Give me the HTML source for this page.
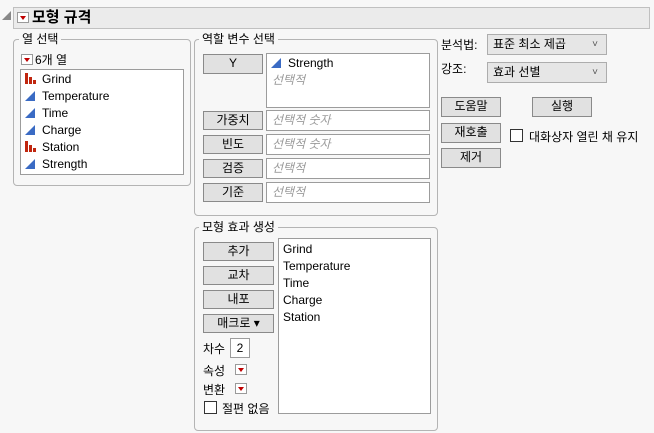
<!DOCTYPE html>
<html><head><meta charset="utf-8"><style>
*{margin:0;padding:0;box-sizing:border-box}
body{width:654px;height:433px;background:#f7f7f7;font-family:"Liberation Sans","Noto Sans CJK KR",sans-serif;font-size:12px;color:#000;position:relative;overflow:hidden}
.a{position:absolute;white-space:nowrap}
.grp{position:absolute;border:1px solid #b4b4b4;border-radius:4px}
.lg{position:absolute;background:#f7f7f7;padding:0 3px;font-size:12px;line-height:14px}
.btn{position:absolute;background:#e1e1e1;border:1px solid #8a8a8a;text-align:center;font-size:12px;line-height:17px}
.box{position:absolute;background:#fff;border:1px solid #9c9c9c}
.ph{color:#9a9a9a;font-style:italic}
.rd{position:absolute;width:12px;height:11px;border:1px solid #9a9a9a;background:#fff}
.rd:after{content:"";position:absolute;left:2px;top:3px;border-left:3px solid transparent;border-right:3px solid transparent;border-top:4px solid #c00000}
.tri{display:inline-block;width:0;height:0;border-left:10px solid transparent;border-bottom:10px solid #3a6bc4;vertical-align:-1px;margin-right:7px}
.bar{display:inline-block;width:10px;height:11px;position:relative;margin-right:7px;vertical-align:-1px}
.bar i{position:absolute;bottom:0;width:3px;background:#c0260f}
.dd{position:absolute;background:#e6e6e6;border:1px solid #adadad;font-size:12px;line-height:19px;padding-left:5px}
.dd:after{content:"˅";position:absolute;right:8px;top:0;font-size:10px;color:#555}
.cb{position:absolute;width:13px;height:13px;border:1px solid #333;background:#fff}
.li{position:absolute;left:0;line-height:17px}
</style></head><body>
<div class="a" style="left:2px;top:11px;width:0;height:0;border-left:9px solid transparent;border-bottom:9px solid #888"></div>
<div class="a" style="left:13px;top:7px;width:637px;height:22px;background:#ebebeb;border:1px solid #c0c0c0"></div>
<div class="rd" style="left:17px;top:12px"></div>
<div class="a" style="left:32px;top:7px;font-size:15px;font-weight:bold;line-height:21px">모형 규격</div>

<div class="grp" style="left:13px;top:39px;width:178px;height:147px"></div>
<div class="lg" style="left:19px;top:32px">열 선택</div>
<div class="rd" style="left:21px;top:54px"></div>
<div class="a" style="left:35px;top:53px;line-height:14px">6개 열</div>
<div class="box" style="left:20px;top:69px;width:164px;height:106px">
<div class="li" style="left:4px;top:1px"><span class="bar"><i style="left:0;height:11px"></i><i style="left:4px;height:7px"></i><i style="left:8px;height:4px"></i></span>Grind</div>
<div class="li" style="left:4px;top:18px"><span class="tri"></span>Temperature</div>
<div class="li" style="left:4px;top:35px"><span class="tri"></span>Time</div>
<div class="li" style="left:4px;top:52px"><span class="tri"></span>Charge</div>
<div class="li" style="left:4px;top:69px"><span class="bar"><i style="left:0;height:11px"></i><i style="left:4px;height:7px"></i><i style="left:8px;height:4px"></i></span>Station</div>
<div class="li" style="left:4px;top:86px"><span class="tri"></span>Strength</div>
</div>

<div class="grp" style="left:194px;top:39px;width:244px;height:177px"></div>
<div class="lg" style="left:199px;top:32px">역할 변수 선택</div>
<div class="btn" style="left:203px;top:54px;width:60px;height:20px">Y</div>
<div class="box" style="left:266px;top:53px;width:164px;height:55px">
<div class="li" style="left:4px;top:1px"><span class="tri"></span>Strength</div>
<div class="li ph" style="left:5px;top:18px">선택적</div></div>
<div class="btn" style="left:203px;top:111px;width:60px;height:19px">가중치</div>
<div class="box ph" style="left:266px;top:110px;width:164px;height:21px;padding-left:5px;line-height:19px">선택적 숫자</div>
<div class="btn" style="left:203px;top:135px;width:60px;height:19px">빈도</div>
<div class="box ph" style="left:266px;top:134px;width:164px;height:21px;padding-left:5px;line-height:19px">선택적 숫자</div>
<div class="btn" style="left:203px;top:159px;width:60px;height:19px">검증</div>
<div class="box ph" style="left:266px;top:158px;width:164px;height:21px;padding-left:5px;line-height:19px">선택적</div>
<div class="btn" style="left:203px;top:183px;width:60px;height:19px">기준</div>
<div class="box ph" style="left:266px;top:182px;width:164px;height:21px;padding-left:5px;line-height:19px">선택적</div>

<div class="a" style="left:441px;top:36px">분석법:</div>
<div class="dd" style="left:487px;top:34px;width:120px;height:21px">표준 최소 제곱</div>
<div class="a" style="left:441px;top:60px">강조:</div>
<div class="dd" style="left:487px;top:62px;width:120px;height:21px">효과 선별</div>
<div class="btn" style="left:441px;top:97px;width:60px;height:20px">도움말</div>
<div class="btn" style="left:532px;top:97px;width:60px;height:20px">실행</div>
<div class="btn" style="left:441px;top:123px;width:60px;height:20px">재호출</div>
<div class="cb" style="left:510px;top:129px"></div>
<div class="a" style="left:529px;top:128px">대화상자 열린 채 유지</div>
<div class="btn" style="left:441px;top:148px;width:60px;height:20px">제거</div>

<div class="grp" style="left:194px;top:227px;width:244px;height:204px"></div>
<div class="lg" style="left:199px;top:220px">모형 효과 생성</div>
<div class="btn" style="left:203px;top:242px;width:71px;height:19px">추가</div>
<div class="btn" style="left:203px;top:266px;width:71px;height:19px">교차</div>
<div class="btn" style="left:203px;top:290px;width:71px;height:19px">내포</div>
<div class="btn" style="left:203px;top:314px;width:71px;height:19px">매크로 ▾</div>
<div class="a" style="left:203px;top:340px">차수</div>
<div class="box" style="left:230px;top:338px;width:20px;height:20px;text-align:center;line-height:18px">2</div>
<div class="a" style="left:203px;top:362px">속성</div>
<div class="rd" style="left:235px;top:364px"></div>
<div class="a" style="left:203px;top:381px">변환</div>
<div class="rd" style="left:235px;top:383px"></div>
<div class="cb" style="left:204px;top:401px"></div>
<div class="a" style="left:222px;top:400px">절편 없음</div>
<div class="box" style="left:278px;top:238px;width:153px;height:176px;overflow:hidden">
<div class="li" style="left:4px;top:2px">Grind</div>
<div class="li" style="left:4px;top:19px">Temperature</div>
<div class="li" style="left:4px;top:36px">Time</div>
<div class="li" style="left:4px;top:53px">Charge</div>
<div class="li" style="left:4px;top:70px">Station</div>
</div>
</body></html>
